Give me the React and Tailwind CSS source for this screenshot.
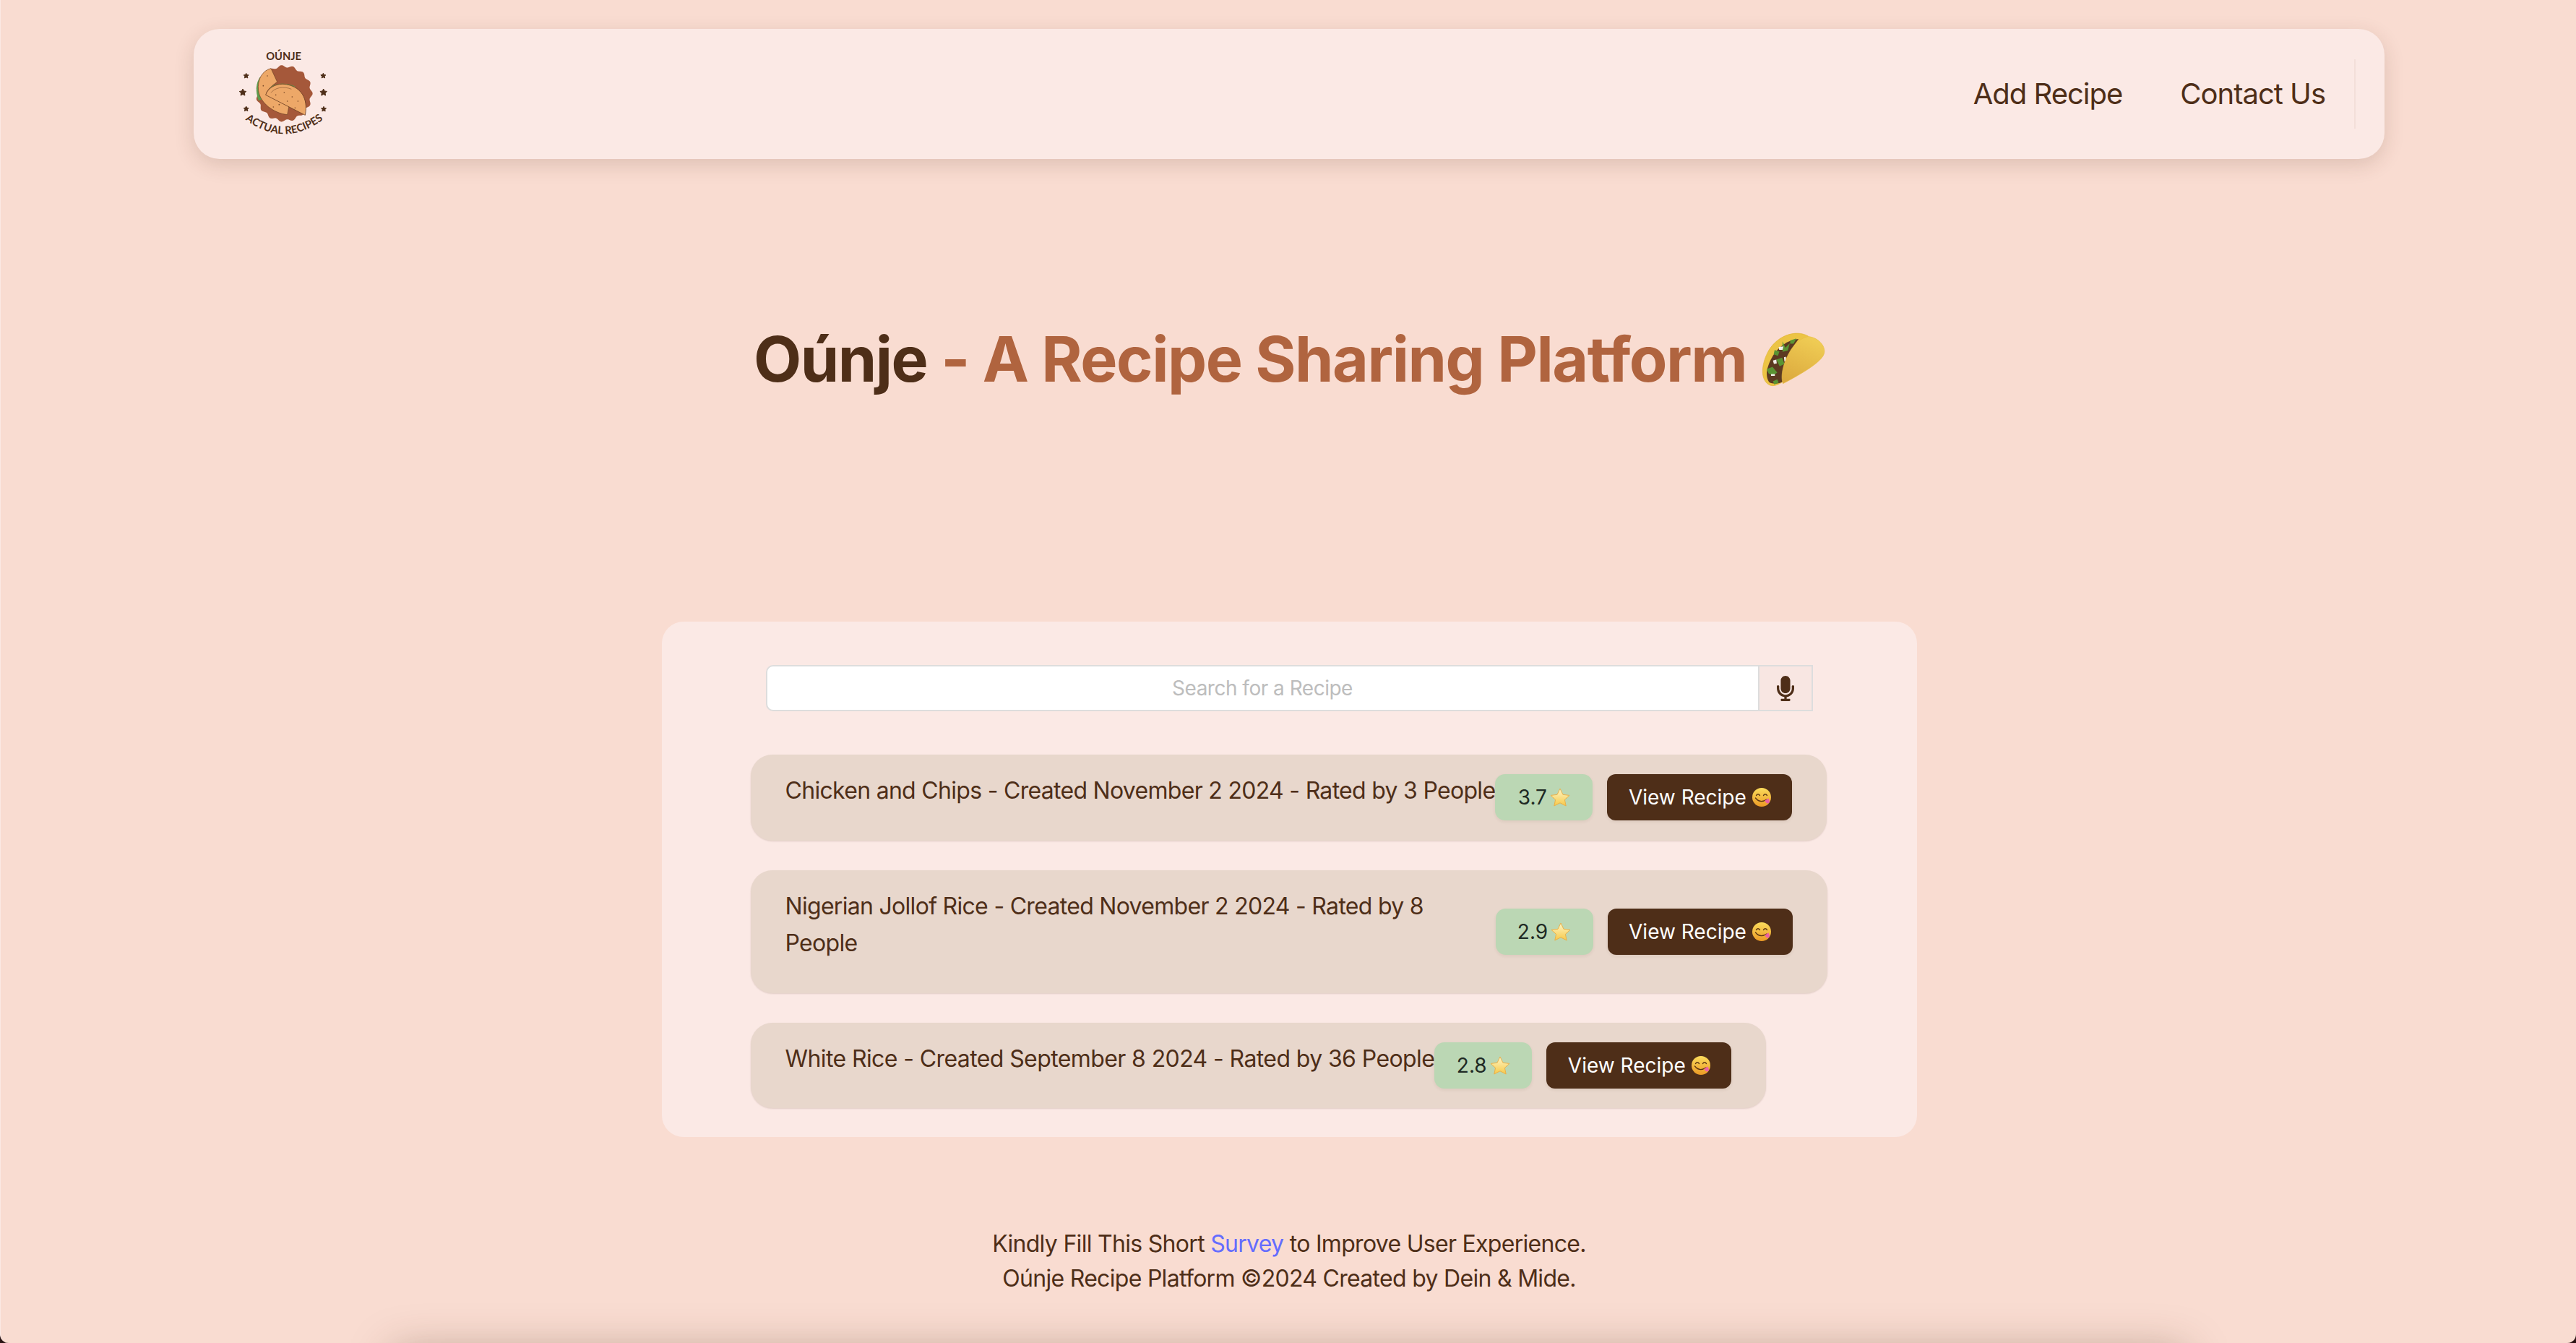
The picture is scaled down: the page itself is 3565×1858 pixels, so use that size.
import { FaMicrophone } from "react-icons/fa";

const recipes = [
  { id: 1, text: "Chicken and Chips - Created November 2 2024 - Rated by 3 People", rating: "3.7", tracking: "tracking-[-0.7px]" },
  { id: 2, text: "Nigerian Jollof Rice - Created November 2 2024 - Rated by 8 People", rating: "2.9", tracking: "tracking-[-0.7px]" },
  { id: 3, text: "White Rice - Created September 8 2024 - Rated by 36 People", rating: "2.8", tracking: "tracking-[-0.6px]" },
];

// wavy badge behind the tacos
const blobPath = () => {
  const points = [];
  for (let i = 0; i < 180; i++) {
    const a = (i / 180) * Math.PI * 2;
    const r = 113 + 5 * Math.cos(a * 15);
    points.push(`${(205 + r * Math.cos(a)).toFixed(1)},${(208 + r * Math.sin(a)).toFixed(1)}`);
  }
  return `M${points.join("L")}Z`;
};

function LogoStar({ x, y, r }) {
  const pts = [];
  for (let i = 0; i < 10; i++) {
    const a = -Math.PI / 2 + (i * Math.PI) / 5;
    const d = i % 2 === 0 ? r : r * 0.5;
    pts.push(`${(x + d * Math.cos(a)).toFixed(1)},${(y + d * Math.sin(a)).toFixed(1)}`);
  }
  return <polygon points={pts.join(" ")} fill="#4e2e18" stroke="#4e2e18" strokeWidth="3" strokeLinejoin="round" />;
}

function Logo() {
  return (
    <svg viewBox="0 0 420 420" className="w-[140px] h-[140px] flex-none">
      <path d={blobPath()} fill="#a5583a" />
      {/* lettuce */}
      <path d="M104 140 C88 165 84 195 98 238 L112 232 L118 150 Z" fill="#5f9a4c" />
      <path d="M142 186 C165 165 215 160 252 180 L240 190 C210 176 170 178 150 196 Z" fill="#5f9a4c" />
      {/* back taco */}
      <path
        d="M150 104 C115 112 92 150 98 196 C104 246 160 290 218 296 L226 254 L130 212 C130 198 150 178 176 160 Z"
        fill="#eda868"
        stroke="#6b3f22"
        strokeWidth="2"
      />
      {/* front taco */}
      <path
        d="M128 214 C140 178 182 162 222 172 C272 184 306 226 292 298 Z"
        fill="#eda868"
        stroke="#6b3f22"
        strokeWidth="2.5"
      />
      <path d="M150 205 C165 185 200 176 235 190" fill="none" stroke="#6b3f22" strokeWidth="1.5" />
      <g fill="#7a4a2a">
        <circle cx="170" cy="214" r="2.5" />
        <circle cx="205" cy="204" r="2.5" />
        <circle cx="238" cy="222" r="2.5" />
        <circle cx="262" cy="240" r="2.5" />
        <circle cx="218" cy="240" r="2.5" />
        <circle cx="250" cy="268" r="2.5" />
        <circle cx="135" cy="135" r="2.5" />
        <circle cx="118" cy="176" r="2.5" />
        <circle cx="160" cy="264" r="2.5" />
        <circle cx="184" cy="254" r="2.5" />
      </g>
      <LogoStar x={47} y={135} r={11} />
      <LogoStar x={33} y={204} r={15} />
      <LogoStar x={47} y={272} r={11} />
      <LogoStar x={367} y={135} r={11} />
      <LogoStar x={368} y={204} r={15} />
      <LogoStar x={369} y={273} r={11} />
      <text x="203" y="70" textAnchor="middle" fill="#4e2e18" fontFamily="'Liberation Sans Narrow', Lato, sans-serif" fontWeight="700" fontSize="44">
        OÚNJE
      </text>
      <path id="logoArc" d="M30 306 Q205 446 380 306" fill="none" />
      <text fill="#4e2e18" fontFamily="'Liberation Sans Narrow', Lato, sans-serif" fontWeight="700" fontSize="44">
        <textPath href="#logoArc" startOffset="50%" textAnchor="middle">
          ACTUAL RECIPES
        </textPath>
      </text>
    </svg>
  );
}

function Taco() {
  return (
    <svg viewBox="45 40 280 250" className="inline-block w-[93px] h-[83px] align-[-10px]">
      <defs>
        <linearGradient id="shell" x1="0.7" y1="0" x2="0.3" y2="1">
          <stop offset="0" stopColor="#f0cd55" />
          <stop offset="1" stopColor="#dcaa3e" />
        </linearGradient>
      </defs>
      {/* back shell */}
      <path d="M245 70 C190 40 110 70 75 140 C50 190 45 250 80 272 C100 285 130 270 150 250 Z" fill="#ecc445" stroke="#e0b53a" strokeWidth="2" />
      {/* filling */}
      <path d="M205 82 C160 85 115 115 88 170 C72 205 65 235 82 262 C100 272 125 268 140 260 L185 110 Z" fill="#5c3a22" />
      <path d="M138 92 l12 26 l18 -18 l-8 30 l-22 6 Z M105 128 l20 6 l-6 18 l-18 -6 Z M112 168 l24 -8 l10 26 l-20 10 Z M72 208 l24 -10 l20 24 l-18 12 l-18 -8 Z M98 258 l18 -8 l6 14 l-18 8 Z M170 88 l26 -8 l-12 22 l-14 0 Z" fill="#5a9433" />
      <path d="M122 115 l20 -2 l-4 14 l-14 0 Z M98 172 l14 -4 l2 16 l-12 2 Z M90 228 l16 0 l0 8 l-16 0 Z M144 158 l8 -2 l2 18 l-8 2 Z" fill="#f2f0ea" />
      {/* front shell */}
      <path d="M245 72 C285 75 318 110 312 140 C306 170 250 210 140 268 C125 230 150 150 190 105 C205 88 225 76 245 72 Z" fill="url(#shell)" stroke="#e6bc40" strokeWidth="2" />
    </svg>
  );
}

function StarEmoji() {
  return (
    <svg viewBox="0 0 28 26" className="inline-block w-7 h-[26px] flex-none">
      <defs>
        <linearGradient id="starFill" x1="0" y1="0" x2="0" y2="1">
          <stop offset="0" stopColor="#fdf6c8" />
          <stop offset="1" stopColor="#f7c948" />
        </linearGradient>
      </defs>
      <path
        d="M14 1 L18 9.3 L27 10.4 L20.4 16.4 L22.2 25 L14 20.8 L5.8 25 L7.6 16.4 L1 10.4 L10 9.3 Z"
        fill="url(#starFill)"
        stroke="#eab04a"
        strokeWidth="1"
        strokeLinejoin="round"
      />
    </svg>
  );
}

function FaceEmoji() {
  return (
    <svg viewBox="0 0 26 26" className="inline-block w-[26px] h-[26px] flex-none">
      <defs>
        <linearGradient id="faceFill" x1="0" y1="0" x2="0" y2="1">
          <stop offset="0" stopColor="#fbdc5c" />
          <stop offset="1" stopColor="#eb9a25" />
        </linearGradient>
      </defs>
      <circle cx="13" cy="13" r="13" fill="url(#faceFill)" />
      <path d="M5.5 10.5 Q8 7 10.5 10.5 M15.5 10.5 Q18 7 20.5 10.5" fill="none" stroke="#5b3412" strokeWidth="1.3" strokeLinecap="round" />
      <path d="M4.5 14 Q11 22 20 16" fill="none" stroke="#5b3412" strokeWidth="1.3" strokeLinecap="round" />
      <path d="M17.5 17.5 L22.5 14.5 L24 18.5 Q23.5 22 21 21.5 Q18.5 21 17.5 17.5 Z" fill="#ec5fa4" />
    </svg>
  );
}

export default function App() {
  return (
    <div className="bg-[#2b1414] font-['Inter',sans-serif] text-[#4e2e18]">
      <div className="h-[1858px] overflow-hidden rounded-b-[12px] border-l border-[#fbe9e4] bg-[#f9dcd1] pl-[2px]">
        <nav className="mx-auto mt-10 flex h-[180px] w-[3032px] items-center justify-between rounded-[36px] bg-[#fbe9e5] pl-[57px] pr-10 shadow-[0_8px_28px_rgba(78,46,24,0.16)]">
          <Logo />
          <div className="flex items-center">
            <a className="text-[40px] leading-none tracking-[-1px]">Add Recipe</a>
            <a className="ml-20 text-[40px] leading-none tracking-[-1px]">Contact Us</a>
            <div className="ml-10 h-24 w-[2px] bg-[#f3dfd9]" />
          </div>
        </nav>

        <h1 className="mt-[225px] pl-1 text-center text-[86px] font-bold leading-[104px] tracking-[-1.5px]">
          Oúnje <span className="text-[#b0643f]">- A Recipe Sharing Platform </span>
          <Taco />
        </h1>

        <main className="mx-auto mt-[311px] h-[713px] w-[1737px] rounded-[30px] bg-[#fbe9e5] pt-[60px]">
          <div className="ml-[144px] flex w-[1449px]">
            <input
              placeholder="Search for a Recipe"
              className="h-[64px] flex-1 rounded-l-[10px] border-2 border-[#dddddd] bg-white text-center text-[28px] tracking-[-0.5px] outline-none placeholder:text-[#bdbdbd]"
            />
            <button className="flex h-[64px] w-[74px] items-center justify-center border-2 border-l-0 border-[#dddddd] bg-[#f8e6e2] text-[#4e2e18]">
              <FaMicrophone className="h-[35px] w-[24px]" />
            </button>
          </div>

          <div className="ml-[123px] mt-[60px] flex flex-col items-start gap-[41px]">
            {recipes.map((r) => (
              <div
                key={r.id}
                className="flex w-fit max-w-[1490px] items-center rounded-[30px] bg-[#e8d7cc] px-12 py-6 shadow-[0_1px_2px_rgba(78,46,24,0.15)]"
              >
                <p className={`mb-[19px] text-[32px] leading-[51.5px] ${r.tracking}`}>{r.text}</p>
                <span className="flex h-16 w-[135px] flex-none items-center justify-center gap-1 rounded-[14px] bg-[#bbd7b4] text-[28px] text-[#1f2a24] shadow-[0_2px_4px_rgba(78,46,24,0.08)]">
                  {r.rating} <StarEmoji />
                </span>
                <button className="ml-5 flex h-16 w-[256px] flex-none items-center justify-center gap-2 rounded-[12px] bg-[#4e2e18] text-[28px] text-white shadow-[0_2px_4px_rgba(78,46,24,0.08)]">
                  View Recipe <FaceEmoji />
                </button>
              </div>
            ))}
          </div>
        </main>

        <footer className="mt-[124px] text-center text-[32px] leading-[48px] tracking-[-0.7px]">
          <p>
            Kindly Fill This Short <a className="text-[#646cff]">Survey</a> to Improve User Experience.
          </p>
          <p>Oúnje Recipe Platform ©2024 Created by Dein &amp; Mide.</p>
        </footer>

        {/* next section starts under the fold, only its shadow shows */}
        <div className="mx-auto mt-[76px] h-40 w-[2480px] shadow-[0_0_60px_rgba(78,46,24,0.35)]" />
      </div>
    </div>
  );
}
